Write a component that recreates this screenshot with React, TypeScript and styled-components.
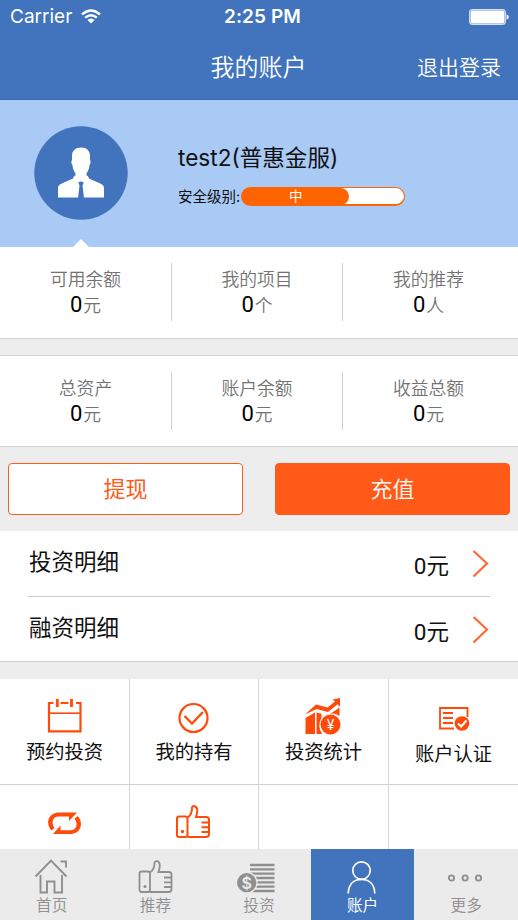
import React from 'react';
import styled, { createGlobalStyle } from 'styled-components';

const BLUE = '#4174bd';
const ORANGE = '#ff4a0a';

const GlobalStyle = createGlobalStyle`
  *, *::before, *::after { box-sizing: border-box; }
  html, body { margin: 0; padding: 0; }
  body {
    font-family: Inter, "Noto Sans CJK SC", sans-serif;
    color: #111;
    background: #ededed;
  }
`;

const Screen = styled.div`
  width: 518px;
  height: 920px;
  display: flex;
  flex-direction: column;
  overflow: hidden;
  background: #ededed;
`;

const Header = styled.header`
  flex: none;
  height: 100px;
  background: ${BLUE};
  color: #fff;
  border-bottom: 1px solid #3a69ad;
`;

const StatusBar = styled.div`
  height: 33px;
  padding: 0 9px 0 10px;
  display: grid;
  grid-template-columns: 1fr auto 1fr;
  align-items: center;
  font-size: 19px;
  line-height: 33px;
`;

const Carrier = styled.div`
  display: flex;
  align-items: center;
  gap: 9px;
`;

const Clock = styled.div`
  font-weight: 600;
  font-size: 19px;
  letter-spacing: 0.1px;
  padding-left: 6px;
`;

const BatterySlot = styled.div`
  display: flex;
  justify-content: flex-end;
`;

const NavBar = styled.div`
  height: 66px;
  padding: 3px 17px 0 0;
  display: grid;
  grid-template-columns: 1fr auto 1fr;
  align-items: center;
  font-weight: 350;
`;

const NavTitle = styled.h1`
  margin: 0;
  padding-left: 16px;
  font-size: 24px;
  line-height: 36px;
  font-weight: 350;
`;

const Logout = styled.button`
  justify-self: end;
  padding: 0;
  border: 0;
  background: none;
  color: inherit;
  font: inherit;
  font-size: 21px;
  line-height: 34px;
`;

const Profile = styled.section`
  flex: none;
  position: relative;
  height: 147px;
  padding: 26px 0 0 34px;
  display: flex;
  gap: 50px;
  background: #a9caf5;
`;

const Notch = styled.div`
  position: absolute;
  left: 73px;
  bottom: 0;
  border: 8px solid transparent;
  border-top: 0;
  border-bottom-color: #fff;
`;

const ProfileInfo = styled.div`
  padding-top: 15px;
`;

const UserName = styled.div`
  font-size: 22.6px;
  line-height: 34px;
`;

const Level = styled.div`
  margin-top: 11px;
  display: flex;
  align-items: center;
  gap: 1px;
  font-size: 14.5px;
  line-height: 21px;
`;

const LevelTrack = styled.div`
  width: 164px;
  height: 19px;
  border: 1px solid #ff6400;
  border-bottom-width: 2px;
  border-radius: 10px;
  background: linear-gradient(to right, #ff6400 30px, #fff 30px);
  overflow: hidden;
`;

const LevelFill = styled.div`
  width: 107px;
  height: 17px;
  border-radius: 0 9px 9px 0;
  background: #ff6400;
  color: #fff;
  font-size: 13.5px;
  line-height: 16px;
  text-align: center;
`;

const Stats = styled.section<{ $bordered?: boolean }>`
  flex: none;
  height: 92px;
  margin-bottom: 16px;
  padding-top: 16px;
  display: grid;
  grid-template-columns: 171px 171px 172px;
  background: #fff;
  border-bottom: 1px solid #d4d4d4;
  border-top: ${(p) => (p.$bordered ? '1px solid #d4d4d4' : '0')};
`;

const Stat = styled.div`
  height: 58px;
  padding-top: 4px;
  text-align: center;
  font-weight: 350;
  color: #737373;
  font-size: 17.8px;
  line-height: 25px;
  & + & { border-left: 1px solid #cfcfcf; }
`;

const StatValue = styled.span`
  margin-right: 1px;
  font-family: Roboto, sans-serif;
  font-size: 22px;
  font-weight: 400;
  color: #000;
`;

const Actions = styled.div`
  flex: none;
  height: 68px;
  padding: 0 8px;
  display: grid;
  grid-template-columns: 235px 235px;
  justify-content: space-between;
  align-items: start;
`;

const ActionButton = styled.button<{ $filled?: boolean }>`
  height: 52px;
  padding: 1px 0 0;
  border: 1px solid #ff5a1a;
  border-radius: 4px;
  background: ${(p) => (p.$filled ? '#ff5a17' : '#fff')};
  color: ${(p) => (p.$filled ? '#fff' : '#ff5a17')};
  font: inherit;
  font-size: 22px;
  line-height: 49px;
  font-weight: ${(p) => (p.$filled ? 350 : 400)};
`;

const Details = styled.section`
  flex: none;
  height: 131px;
  padding: 0 28px;
  background: #fff;
  border-bottom: 1px solid #cfd2d0;
`;

const DetailRow = styled.div`
  height: 65px;
  display: flex;
  align-items: flex-start;
  font-size: 22.5px;
  line-height: 34px;
  & + & { height: 66px; border-top: 1px solid #ccc; }
`;

const DetailName = styled.span`
  flex: 1;
  padding: 14px 0 0 1px;
`;

const DetailValue = styled.span`
  padding: 18px 24px 0 0;
  font-family: Roboto, "Noto Sans CJK SC", sans-serif;
`;

const Chevron = styled.svg`
  margin: 18px 1px 0 -1px;
`;

const Grid = styled.section`
  flex: 1;
  min-height: 0;
  overflow: hidden;
  margin-top: 17px;
  display: grid;
  grid-template-columns: 130px 129px 130px 129px;
  grid-auto-rows: 106px;
  background: #fff;
`;

const Cell = styled.div<{ $shift?: number; $gap?: number }>`
  padding-top: ${(p) => 18 + (p.$shift ?? 0)}px;
  display: flex;
  flex-direction: column;
  align-items: center;
  gap: ${(p) => p.$gap ?? 1}px;
  border-right: 1px solid #d6d6d6;
  border-bottom: 1px solid #cfcfcf;
  font-size: 19.3px;
  line-height: 32px;
  &:nth-child(4n) { border-right: 0; }
`;

const TabBar = styled.nav`
  flex: none;
  height: 71px;
  display: grid;
  grid-template-columns: repeat(5, 1fr);
  background: #ebebeb;
`;

const Tab = styled.div<{ $active?: boolean }>`
  padding-top: 9px;
  display: flex;
  flex-direction: column;
  align-items: center;
  background: ${(p) => (p.$active ? BLUE : 'transparent')};
  color: ${(p) => (p.$active ? '#fff' : '#8f8f8f')};
  font-size: 15.7px;
  line-height: 23px;
  font-weight: ${(p) => (p.$active ? 400 : 350)};
`;

const Icon = styled.svg`
  flex: none;
  display: block;
  overflow: visible;
  fill: none;
  stroke: currentColor;
`;

const OrangeIcon = styled(Icon)`
  color: ${ORANGE};
`;

const WifiIcon = () => (
  <svg width="20" height="15" viewBox="0 0 20 15" fill="none" stroke="#fff" strokeWidth="2.4">
    <path d="M1 5.4Q10-2.6 19 5.4" />
    <path d="M4.2 8.7Q10 3.6 15.8 8.7" />
    <path d="M10 14.6L6.4 11Q10 8 13.6 11Z" fill="#fff" stroke="none" />
  </svg>
);

const BatteryIcon = () => (
  <svg width="40" height="16" viewBox="0 0 40 16">
    <rect x=".6" y=".6" width="35.8" height="14.8" rx="3" fill="none" stroke="#d5e2f5" strokeWidth="1.1" />
    <rect x="1.5" y="1.5" width="34" height="13" rx="2" fill="#fff" />
    <path d="M37.6 5.2q2.2.9 2.2 2.8t-2.2 2.8z" fill="#fff" />
  </svg>
);

const Avatar = () => (
  <svg width="94" height="94" viewBox="0 0 94 94">
    <circle cx="47" cy="47" r="46.7" fill={BLUE} />
    <path
      fill="#fff"
      d="M47 21.500c5.500 0 9 3 9 8.500v4c1 1 .7 4-.5 5-.2 4-1.500 6-3 8.500v2c1.500 0 2 1.500 2.500 3l9 4c5 2.200 6 3 6 6V71.500H24V62.500c0-3 1-3.800 6-6l9-4c.5-1.500 1-3 2.500-3v-2c-1.500-2.500-2.800-4.500-3-8.500-1.200-1-1.500-4-.5-5v-4c0-5.500 3.500-8.500 9-8.500z"
    />
    <path fill={BLUE} d="M44.300 56.500q2.700-1.800 5.400 0l-1.200 3L50 72h-6l1.500-12.500z" />
  </svg>
);

const CalendarIcon = () => (
  <OrangeIcon width="36" height="38" viewBox="0.5 0 36 38" strokeWidth="2.200">
    <path d="M7 6H2.500v28.300h31.500V6H29.500M14 6h8" />
    <path d="M2.500 16.200h31.500" strokeWidth="1.600" />
    <path d="M10.800 2v8M25 2v8" strokeWidth="2.800" />
  </OrangeIcon>
);

const CheckIcon = () => (
  <OrangeIcon width="36" height="38" viewBox="0.5 0 36 38" strokeWidth="2.200">
    <circle cx="18" cy="21" r="14" />
    <path d="M9 19l7.500 7.500 11-11.500" strokeWidth="2.300" />
  </OrangeIcon>
);

const ChartIcon = () => (
  <OrangeIcon width="36" height="38" viewBox="1 0 36 38">
    <g fill="currentColor" stroke="none">
      <path d="M0 17.500L11 7.500l11.500 3L30 4.500 27.500 2.500 35 1v8.500l-2.400-2.200L23 15 11.500 12z" />
      <path d="M.5 21l9.500-5.500V37H.5zM11.500 15.500l5 1.300v4Q12 28.500 17 37h-5.500z" />
      <path d="M25 17l9.500-6.500V19Q29 15.500 25 17z" />
      <circle cx="25.500" cy="27.500" r="10" />
      <text x="25.500" y="33" textAnchor="middle" fontSize="14" fontWeight="400" fill="#fff">¥</text>
    </g>
  </OrangeIcon>
);

const CertificateIcon = () => (
  <OrangeIcon width="36" height="38" viewBox="0 2 36 38" strokeWidth="1.800">
    <path d="M18 31.500H4V11h27.500v9" />
    <path d="M7 16h10M7 21h10M7 26h10" />
    <circle cx="26" cy="26.500" r="7.300" fill="currentColor" stroke="none" />
    <path d="M22 26.500l3.200 3 5.300-6" stroke="#fff" strokeWidth="2.200" />
  </OrangeIcon>
);

const TransferIcon = () => (
  <OrangeIcon width="36" height="38" viewBox="0.5 0 36 38">
    <g fill="currentColor" stroke="none">
      <path d="M5 27.500C-2 19 3 9.500 12.500 9.500H30.500L22.500 18V13.500H12C6 13.500 4.500 20 8 25z" />
      <path d="M31.500 13C38 22 33 31 24 31H6.500L14 22.500V27.200h10C30 27.200 32 21 28 15.500z" />
    </g>
  </OrangeIcon>
);

const ThumbShape = () => (
  <>
    <rect x="1.500" y="12.500" width="10.500" height="20.500" rx="2" />
    <path d="M12 13.500C16 11 16.500 8 16.500 4c0-3 5-2.500 5.300 2 .1 2.500-.6 5-1.300 7h10q3 0 3 2.500V30q0 3-3 3H12M26 18.500h7M26 23.300h7M26 28h7" />
    <circle cx="7" cy="27.500" r=".7" fill="currentColor" />
  </>
);

const HomeIcon = () => (
  <Icon width="36" height="36" viewBox="0 0 36 36" strokeWidth="1.900">
    <path d="M1.500 18.500L17 2.500l15.500 16M6.500 17v17.500H13V23.500h7.500v11H28V17M26.500 3.500H32v6" />
  </Icon>
);

const InvestIcon = () => (
  <Icon width="36" height="36" viewBox="0 0 36 36" strokeWidth="2.300">
    <path d="M9 7h24.500M9 11.300h24.500M9 15.700h24.500M9 20h24.500M9 24.300h24.500M9 28.700h24.500M9 33h24.500" />
    <circle cx="5.700" cy="24.700" r="10.300" fill="currentColor" stroke="#ebebeb" strokeWidth="1.300" />
    <text x="5.700" y="30.500" textAnchor="middle" fontSize="16" fontWeight="600" fill="#ebebeb" stroke="none">$</text>
  </Icon>
);

const AccountIcon = () => (
  <Icon width="36" height="36" viewBox="0.5 0 36 36" strokeWidth="1.700">
    <circle cx="17" cy="12.600" r="8.700" />
    <path d="M3.700 35.500C4 26 9.500 21.300 17 21.300S30 26 30.300 35.500" />
  </Icon>
);

const MoreIcon = () => (
  <Icon width="36" height="36" viewBox="0 0 36 36" strokeWidth="1.900">
    <circle cx="3.500" cy="20" r="2.600" />
    <circle cx="17.100" cy="20" r="2.600" />
    <circle cx="30.500" cy="20" r="2.600" />
  </Icon>
);

const summary = [
  ['可用余额', '元'],
  ['我的项目', '个'],
  ['我的推荐', '人'],
];
const assets = [
  ['总资产', '元'],
  ['账户余额', '元'],
  ['收益总额', '元'],
];

const StatItems = ({ items }: { items: string[][] }) => (
  <>
    {items.map(([name, unit]) => (
      <Stat key={name}>
        <div>{name}</div>
        <div>
          <StatValue>0</StatValue>
          {unit}
        </div>
      </Stat>
    ))}
  </>
);

export default function App() {
  return (
    <Screen>
      <GlobalStyle />
      <Header>
        <StatusBar>
          <Carrier>
            Carrier
            <WifiIcon />
          </Carrier>
          <Clock>2:25 PM</Clock>
          <BatterySlot>
            <BatteryIcon />
          </BatterySlot>
        </StatusBar>
        <NavBar>
          <span />
          <NavTitle>我的账户</NavTitle>
          <Logout>退出登录</Logout>
        </NavBar>
      </Header>

      <Profile>
        <Avatar />
        <ProfileInfo>
          <UserName>test2(普惠金服)</UserName>
          <Level>
            安全级别:
            <LevelTrack>
              <LevelFill>中</LevelFill>
            </LevelTrack>
          </Level>
        </ProfileInfo>
        <Notch />
      </Profile>

      <Stats>
        <StatItems items={summary} />
      </Stats>
      <Stats $bordered>
        <StatItems items={assets} />
      </Stats>

      <Actions>
        <ActionButton>提现</ActionButton>
        <ActionButton $filled>充值</ActionButton>
      </Actions>

      <Details>
        {['投资明细', '融资明细'].map((name) => (
          <DetailRow key={name}>
            <DetailName>{name}</DetailName>
            <DetailValue>0元</DetailValue>
            <Chevron width="17" height="29" viewBox="0 0 17 29" fill="none" stroke="#ff6a33" strokeWidth="2.200">
              <path d="M1.500 2L15 14.500 1.500 27.500" />
            </Chevron>
          </DetailRow>
        ))}
      </Details>

      <Grid>
        <Cell><CalendarIcon />预约投资</Cell>
        <Cell><CheckIcon />我的持有</Cell>
        <Cell><ChartIcon />投资统计</Cell>
        <Cell $shift={2}><CertificateIcon />账户认证</Cell>
        <Cell $gap={2}><TransferIcon />债权转让</Cell>
        <Cell $gap={2}>
          <OrangeIcon width="36" height="38" viewBox="0.5 -1 36 38" strokeWidth="2">
            <ThumbShape />
          </OrangeIcon>
          我的推荐
        </Cell>
        <Cell />
        <Cell />
      </Grid>

      <TabBar>
        <Tab><HomeIcon />首页</Tab>
        <Tab>
          <Icon width="36" height="36" viewBox="-1 -1 36 36" strokeWidth="1.800">
            <ThumbShape />
          </Icon>
          推荐
        </Tab>
        <Tab><InvestIcon />投资</Tab>
        <Tab $active><AccountIcon />账户</Tab>
        <Tab><MoreIcon />更多</Tab>
      </TabBar>
    </Screen>
  );
}
